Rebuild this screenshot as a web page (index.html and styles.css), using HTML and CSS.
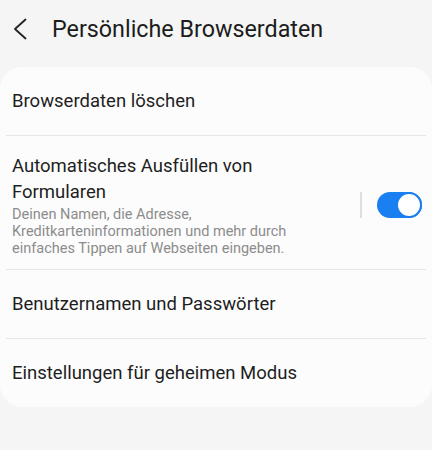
FILE: index.html
```html
<!DOCTYPE html>
<html lang="de">
<head>
<meta charset="utf-8">
<link rel="stylesheet" href="styles.css">
</head>
<body>
<header class="appbar">
  <span class="back">
    <svg width="14" height="22" viewBox="0 0 14 22"><path d="M12.5 1.5 L2 11 L12.5 20.5" fill="none" stroke="#222" stroke-width="1.8" stroke-linecap="round" stroke-linejoin="round"/></svg>
  </span>
  <h1 class="title">Persönliche Browserdaten</h1>
</header>
<main class="card">
  <div class="row">
    <div class="label">Browserdaten löschen</div>
  </div>
  <div class="row row-switch">
    <div class="texts">
      <div class="label">Automatisches Ausfüllen von Formularen</div>
      <div class="desc">Deinen Namen, die Adresse, Kreditkarteninformationen und mehr durch einfaches Tippen auf Webseiten eingeben.</div>
    </div>
    <span class="vsep"></span>
    <span class="switch"><span class="thumb"></span></span>
  </div>
  <div class="row">
    <div class="label">Benutzernamen und Passwörter</div>
  </div>
  <div class="row">
    <div class="label">Einstellungen für geheimen Modus</div>
  </div>
</main>
</body>
</html>
```
FILE: styles.css
```css
* { box-sizing: border-box; }
html, body { margin: 0; padding: 0; }
body {
  background: #f5f5f5;
  font-family: Roboto, "Noto Sans", sans-serif;
  color: #1e1e1e;
  width: 432px;
  height: 450px;
  overflow: hidden;
}
.appbar {
  display: flex;
  align-items: center;
  height: 58px;
  padding-left: 13px;
}
.back {
  display: flex;
  width: 39px;
}
.title {
  margin: 0;
  font-size: 23.3px;
  font-weight: 400;
  color: #1c1c1c;
}
.card {
  margin-top: 9px;
  background: #fcfcfc;
  border-radius: 22px;
  padding: 0 6px;
}
.row {
  display: flex;
  align-items: center;
  min-height: 69px;
  padding: 0 6px;
  border-bottom: 1px solid #e6e6e6;
}
.row:last-child { border-bottom: none; min-height: 68px; }
.row-switch {
  min-height: 134px;
  padding-top: 4px;
  padding-right: 0;
}
.texts { flex: 1; }
.label {
  font-size: 18.5px;
  line-height: 26px;
}
.row-switch .label { width: 290px; }
.desc {
  font-size: 14.5px;
  line-height: 17px;
  color: #8c8c8c;
  margin-top: 1px;
  width: 310px;
}
.vsep {
  width: 2px;
  height: 26px;
  background: #dedede;
  margin-right: 15px;
}
.switch {
  position: relative;
  width: 45px;
  height: 26px;
  border-radius: 13px;
  background: #1a7ff0;
  margin-right: 4px;
}
.thumb {
  position: absolute;
  right: 0;
  top: 0;
  width: 26px;
  height: 26px;
  border-radius: 50%;
  background: #fff;
  border: 2px solid #1a7ff0;
}
```
